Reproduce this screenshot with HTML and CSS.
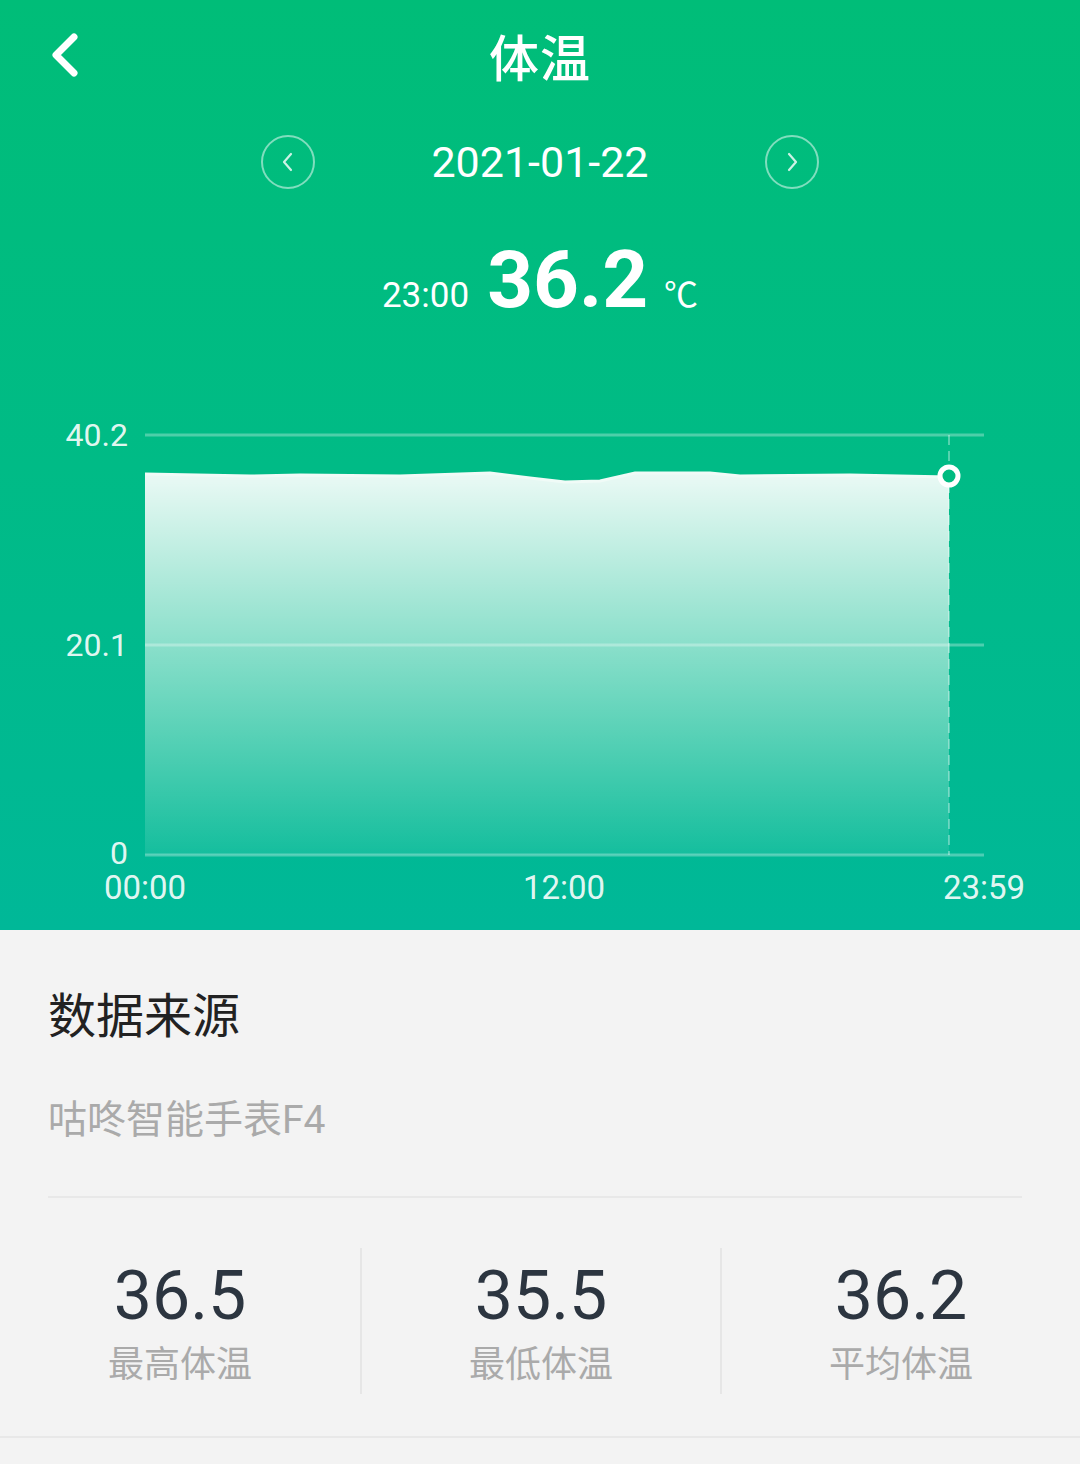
FILE: index.html
```html
<!DOCTYPE html>
<html lang="zh-CN">
<head>
    <meta charset="UTF-8">
    <meta name="viewport" content="width=device-width, initial-scale=1.0">
    <title>体温</title>
    <link rel="stylesheet" href="styles.css">
</head>
<body>
    <div id="top">
        <div class="nav">
            <a class="back" href="#">
                <svg width="34" height="46" viewBox="0 0 34 46"><path d="M26 5 L8 23 L26 41" fill="none" stroke="#fff" stroke-width="7" stroke-linecap="round" stroke-linejoin="round"/></svg>
            </a>
            <h1>体温</h1>
            <span></span>
        </div>

        <div class="date-row">
            <span class="circle-btn">
                <svg width="20" height="24" viewBox="0 0 20 24"><path d="M13 4 L6 12 L13 20" fill="none" stroke="rgba(255,255,255,0.8)" stroke-width="2.2" stroke-linecap="round" stroke-linejoin="round"/></svg>
            </span>
            <span class="date">2021-01-22</span>
            <span class="circle-btn">
                <svg width="20" height="24" viewBox="0 0 20 24"><path d="M7 4 L14 12 L7 20" fill="none" stroke="rgba(255,255,255,0.8)" stroke-width="2.2" stroke-linecap="round" stroke-linejoin="round"/></svg>
            </span>
        </div>

        <div class="reading">
            <span class="time">23:00</span>
            <span class="value">36.2</span>
            <span class="unit">℃</span>
        </div>

        <svg class="chart" width="1080" height="550" viewBox="0 0 1080 550">
            <defs>
                <linearGradient id="fill" x1="0" y1="0" x2="0" y2="1">
                    <stop offset="0" stop-color="#fff" stop-opacity="0.92"/>
                    <stop offset="0.5" stop-color="#fff" stop-opacity="0.5"/>
                    <stop offset="1" stop-color="#fff" stop-opacity="0.08"/>
                </linearGradient>
            </defs>
            <line x1="145" y1="55" x2="984" y2="55" class="grid"/>
            <line x1="145" y1="265" x2="984" y2="265" class="grid"/>
            <path d="M145 94 L250 96 L300 95 L400 96 L490 93 L530 98 L565 102 L600 101 L635 93 L710 93 L740 96 L850 95 L949 97 L949 475 L145 475 Z" fill="url(#fill)"/>
            <path d="M145 94 L250 96 L300 95 L400 96 L490 93 L530 98 L565 102 L600 101 L635 93 L710 93 L740 96 L850 95 L949 97" fill="none" stroke="#f0fbf7" stroke-width="3"/>
            <line x1="145" y1="475" x2="984" y2="475" class="grid"/>
            <line x1="949" y1="55" x2="949" y2="475" class="dash"/>
            <circle cx="949" cy="96" r="9" fill="#00bb80" stroke="#fff" stroke-width="5"/>
            <text x="128" y="66" class="axis" text-anchor="end">40.2</text>
            <text x="128" y="276" class="axis" text-anchor="end">20.1</text>
            <text x="128" y="484" class="axis" text-anchor="end">0</text>
            <text x="145" y="519" class="axis x" text-anchor="middle">00:00</text>
            <text x="564" y="519" class="axis x" text-anchor="middle">12:00</text>
            <text x="984" y="519" class="axis x" text-anchor="middle">23:59</text>
        </svg>
    </div>

    <div id="info">
        <h2>数据来源</h2>
        <p class="source">咕咚智能手表F4</p>
        <div class="stats">
            <div class="stat">
                <div class="num">36.5</div>
                <div class="label">最高体温</div>
            </div>
            <div class="stat">
                <div class="num">35.5</div>
                <div class="label">最低体温</div>
            </div>
            <div class="stat">
                <div class="num">36.2</div>
                <div class="label">平均体温</div>
            </div>
        </div>
    </div>
</body>
</html>
```

FILE: styles.css
```css
body {
    margin: 0;
    padding: 0;
    background-color: #f3f3f3;
    font-family: Roboto, "Noto Sans CJK SC", sans-serif;
}

#top {
    background: linear-gradient(180deg, #00bd78 0%, #00bb86 50%, #00b898 100%);
    color: #fff;
}

.nav {
    height: 110px;
    display: grid;
    grid-template-columns: 1fr auto 1fr;
    align-items: center;
}

.back {
    display: flex;
    padding-left: 48px;
}

.nav h1 {
    margin: 0;
    font-size: 50px;
    font-weight: 500;
    letter-spacing: 1px;
}

.date-row {
    display: flex;
    justify-content: center;
    align-items: center;
    height: 56px;
    margin-top: 24px;
}

.circle-btn {
    width: 50px;
    height: 50px;
    border: 2px solid rgba(255, 255, 255, 0.5);
    border-radius: 50%;
    display: flex;
    align-items: center;
    justify-content: center;
}

.date {
    width: 450px;
    text-align: center;
    font-size: 43px;
}

.reading {
    display: flex;
    justify-content: center;
    align-items: baseline;
    margin-top: 50px;
    height: 84px;
}

.time {
    font-size: 35px;
    margin-right: 18px;
}

.value {
    font-size: 80px;
    font-weight: 700;
    line-height: 1;
}

.unit {
    font-size: 34px;
    margin-left: 16px;
}

.chart {
    display: block;
    margin-top: 56px;
}

.grid {
    stroke: rgba(255, 255, 255, 0.3);
    stroke-width: 3;
}

.dash {
    stroke: rgba(255, 255, 255, 0.45);
    stroke-width: 1.5;
    stroke-dasharray: 10 6;
}

.axis {
    fill: rgba(255, 255, 255, 0.9);
    font-size: 32px;
    font-family: Roboto, sans-serif;
}

.axis.x {
    font-size: 33px;
}

#info {
    padding: 0 58px 0 48px;
}

#info h2 {
    margin: 0;
    padding-top: 62px;
    font-size: 48px;
    font-weight: 400;
    color: #222;
    line-height: 50px;
}

.source {
    margin: 58px 0 0;
    font-size: 39px;
    line-height: 40px;
    color: #aaa;
    padding-bottom: 56px;
    border-bottom: 2px solid #e8e8e8;
}

.stats {
    display: grid;
    grid-template-columns: repeat(3, 1fr);
    margin: 0 -58px 0 -48px;
    padding: 50px 0 42px;
    border-bottom: 2px solid #e8e8e8;
}

.stat {
    text-align: center;
    border-left: 2px solid #e6e6e6;
    padding: 8px 0 4px;
}

.stat:first-child {
    border-left: none;
}

.num {
    font-size: 68px;
    line-height: 80px;
    color: #2c3540;
}

.label {
    font-size: 36px;
    line-height: 50px;
    color: #aaa;
    margin-top: 4px;
}
```
